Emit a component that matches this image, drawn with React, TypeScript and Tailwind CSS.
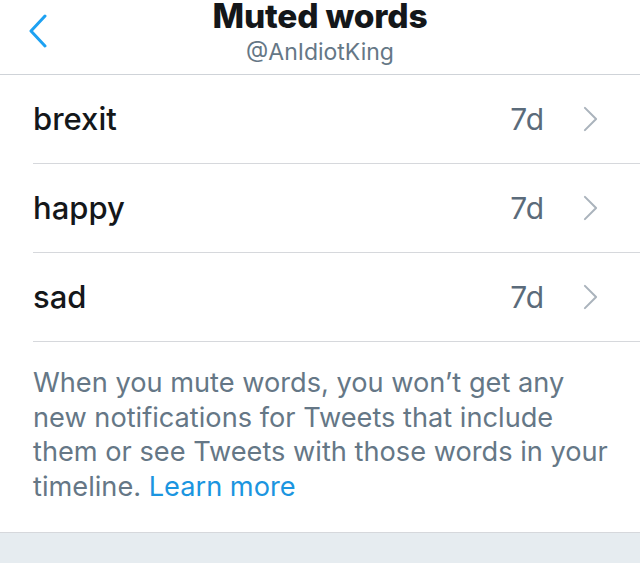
import React from 'react';

const words = ['brexit', 'happy', 'sad'];

function Chevron({ className }: { className?: string }) {
    return (
        <svg viewBox="0 0 16 28" className={className} fill="none" stroke="currentColor" strokeWidth="2.2" strokeLinecap="round" strokeLinejoin="round">
            <path d="M2 2 L14 14 L2 26" />
        </svg>
    );
}

export default function App() {
    return (
        <div className="w-[640px] h-[563px] bg-[#e6ecf0] font-['Inter','Liberation_Sans',sans-serif] overflow-hidden">
            <div className="bg-white">
                {/* Header */}
                <header className="relative h-[75px] border-b border-[#cfd3d8] flex flex-col items-center">
                    <button className="absolute left-[28px] top-[14px] text-[#1da1f2]">
                        <svg viewBox="0 0 20 34" className="w-[20px] h-[34px]" fill="none" stroke="currentColor" strokeWidth="3" strokeLinecap="round" strokeLinejoin="round">
                            <path d="M17 2 L3 17 L17 32" />
                        </svg>
                    </button>
                    <h1 className="text-[33.5px] leading-[32px] font-extrabold text-[#14171a] tracking-[-0.2px]">Muted words</h1>
                    <span className="text-[23px] leading-[26px] text-[#657786] mt-[7px]">@AnIdiotKing</span>
                </header>

                {/* Words */}
                <ul>
                    {words.map((w) => (
                        <li key={w} className="pl-[33px]">
                            <div className="h-[89px] border-b border-[#d6d8dc] flex items-center pr-[42px]">
                                <span className="text-[31px] font-medium text-[#14171a] flex-1">{w}</span>
                                <span className="text-[30px] text-[#5b6b7a] mr-[39px]">7d</span>
                                <Chevron className="w-[15px] h-[26px] text-[#aab3bc]" />
                            </div>
                        </li>
                    ))}
                </ul>

                {/* Footnote */}
                <div className="pl-[33px] pr-[20px] pt-[24px] pb-[28px] border-b border-[#d6d8dc]">
                    <p className="text-[27.2px] leading-[34.5px] text-[#657786] whitespace-nowrap">
                        When you mute words, you won’t get any<br />
                        new notifications for Tweets that include<br />
                        them or see Tweets with those words in your<br />
                        timeline. <a className="text-[#1b95e0]">Learn more</a>
                    </p>
                </div>
            </div>
        </div>
    );
}
